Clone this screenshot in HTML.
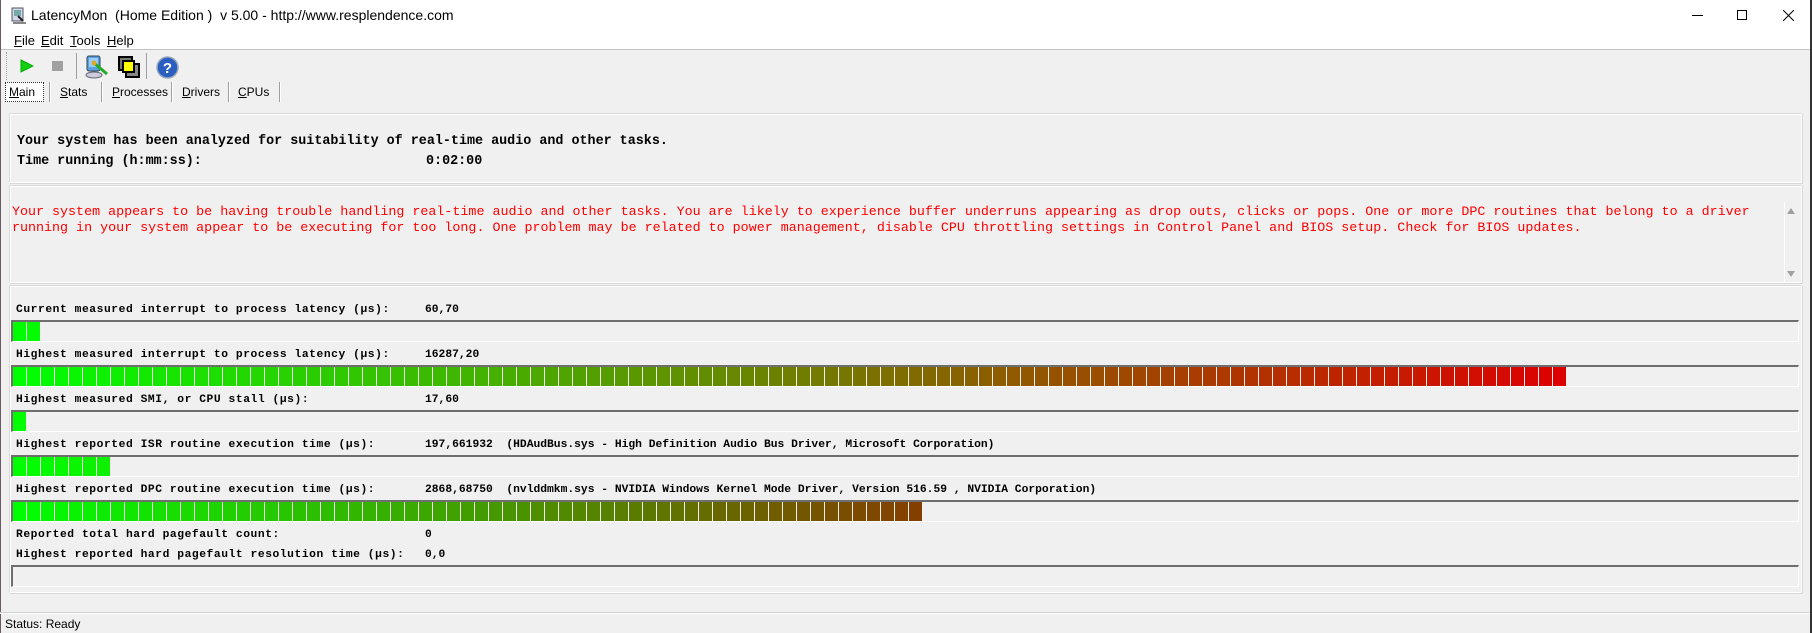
<!DOCTYPE html>
<html><head><meta charset="utf-8"><style>
*{margin:0;padding:0;box-sizing:border-box}
body{width:1812px;height:633px;background:#f0f0f0;position:relative;overflow:hidden;font-family:"Liberation Sans",sans-serif;font-size:13px;color:#000}
.a{position:absolute;white-space:nowrap}
.mono{font-family:"Liberation Mono",monospace}
.panel{position:absolute;left:9px;right:10px;border:1px solid #dadada;border-right-color:#fff;border-bottom-color:#fff;box-shadow:inset 1px 1px 0 #fff, 1px 1px 0 #d8d8d8}
.lbl{font-family:"Liberation Mono",monospace;font-size:11.3px;letter-spacing:0.55px;font-weight:bold;position:absolute;left:16px;white-space:nowrap;line-height:13px}
.val{left:425px;letter-spacing:0}
.bar{position:absolute;left:11px;width:1788px;height:22px;border-top:2px solid #6e6e6e;border-left:2px solid #6e6e6e;border-right:1px solid #fff;border-bottom:1px solid #fff;overflow:hidden}
.seg{position:absolute;top:0;height:19px;width:13px}
.tab{position:absolute;top:85px;font-size:12px}
.sep{position:absolute;top:82px;width:1px;height:20px;background:#a0a0a0;box-shadow:1px 0 0 #fff}
u{text-decoration:underline}
</style></head><body>
<div class="a" style="left:0;top:0;width:1812px;height:50px;background:#fff;border-bottom:1px solid #c4c4c4"></div>
<div class="a" style="right:0;top:0;width:2px;height:633px;background:#333"></div>
<div class="a" style="left:0;top:0;width:1px;height:633px;background:#6a5a66"></div>
<svg class="a" style="left:10px;top:7px" width="18" height="18" viewBox="0 0 18 18"><rect x="2" y="1" width="11" height="13" fill="#cfd8e6" stroke="#556" /><rect x="4" y="3" width="7" height="6" fill="#7aa"/><path d="M3 15h13v2H3z" fill="#888"/><path d="M8 9l5 5" stroke="#222" stroke-width="2"/></svg>
<div class="a" style="left:31px;top:7px;font-size:14px">LatencyMon&nbsp; (Home Edition )&nbsp; v 5.00 - http://www.resplendence.com</div>
<div class="a" style="left:1692px;top:15px;width:11px;height:1px;background:#000"></div>
<div class="a" style="left:1737px;top:10px;width:10px;height:10px;border:1px solid #000"></div>
<svg class="a" style="left:1783px;top:10px" width="11" height="11"><path d="M0 0L11 11M11 0L0 11" stroke="#000" stroke-width="1"/></svg>
<div class="a" style="left:14px;top:33px"><u>F</u>ile</div>
<div class="a" style="left:41px;top:33px"><u>E</u>dit</div>
<div class="a" style="left:70px;top:33px"><u>T</u>ools</div>
<div class="a" style="left:107px;top:33px"><u>H</u>elp</div>
<div class="a" style="left:6px;top:52px;width:1px;height:28px;border-left:1px dotted #999"></div>
<svg class="a" style="left:20px;top:59px" width="14" height="14"><path d="M1 1L13 7L1 13Z" fill="#10d010" stroke="#0a0" stroke-width="1"/></svg>
<div class="a" style="left:52px;top:61px;width:11px;height:10px;background:#a0a0a0"></div>
<div class="a" style="left:76px;top:53px;width:1px;height:26px;background:#a0a0a0"></div>
<svg class="a" style="left:84px;top:54px" width="26" height="26" viewBox="0 0 26 26"><rect x="3" y="2" width="13" height="15" rx="2" fill="#5aa0e0" stroke="#345"/><rect x="5" y="4" width="9" height="9" fill="#9cf"/><ellipse cx="10" cy="21" rx="8" ry="3" fill="#ccd" stroke="#667"/><path d="M10 9l13 11" stroke="#2a2" stroke-width="3"/><circle cx="10" cy="9" r="2.5" fill="#da2"/></svg>
<svg class="a" style="left:117px;top:55px" width="24" height="24" viewBox="0 0 24 24"><rect x="9" y="9" width="13" height="13" fill="#888" stroke="#000" stroke-width="2"/><rect x="2" y="2" width="13" height="13" fill="#777" stroke="#000" stroke-width="2"/><rect x="6" y="6" width="11" height="11" fill="#ff0" stroke="#000" stroke-width="2"/></svg>
<div class="a" style="left:146px;top:53px;width:1px;height:26px;background:#a0a0a0"></div>
<svg class="a" style="left:156px;top:56px" width="23" height="23" viewBox="0 0 23 23"><circle cx="11.5" cy="11.5" r="10.5" fill="#2a5fc0" stroke="#9ab" stroke-width="1.5"/><text x="11.5" y="17" font-family="Liberation Sans" font-weight="bold" font-size="15" fill="#fff" text-anchor="middle">?</text></svg>
<div class="a" style="left:5px;top:82px;width:39px;height:20px;border:1px dotted #333;background:#fff"></div>
<div class="tab" style="left:9px"><u>M</u>ain</div>
<div class="sep" style="left:49px"></div>
<div class="tab" style="left:60px"><u>S</u>tats</div>
<div class="sep" style="left:101px"></div>
<div class="tab" style="left:112px"><u>P</u>rocesses</div>
<div class="sep" style="left:171px"></div>
<div class="tab" style="left:182px"><u>D</u>rivers</div>
<div class="sep" style="left:228px"></div>
<div class="tab" style="left:238px"><u>C</u>PUs</div>
<div class="sep" style="left:279px"></div>
<div class="panel" style="top:113px;height:70px"></div>
<div class="a mono" style="left:17px;top:134px;font-size:13.4px;font-weight:bold;line-height:16px">Your system has been analyzed for suitability of real-time audio and other tasks.</div>
<div class="a mono" style="left:17px;top:154px;font-size:13.4px;font-weight:bold;line-height:16px">Time running (h:mm:ss):</div>
<div class="a mono" style="left:426px;top:154px;font-size:13.4px;font-weight:bold;line-height:16px">0:02:00</div>
<div class="panel" style="top:185px;height:98px"></div>
<div class="a mono" style="left:12px;top:205px;font-size:13.35px;line-height:16px;color:#ff0000">Your system appears to be having trouble handling real-time audio and other tasks. You are likely to experience buffer underruns appearing as drop outs, clicks or pops. One or more DPC routines that belong to a driver<br>running in your system appear to be executing for too long. One problem may be related to power management, disable CPU throttling settings in Control Panel and BIOS setup. Check for BIOS updates.</div>
<div class="a" style="left:1784px;top:202px;width:1px;height:80px;background:#fff"></div>
<svg class="a" style="left:1786px;top:207px" width="10" height="8"><path d="M1 7L5 1L9 7Z" fill="#a0a0a0"/></svg>
<svg class="a" style="left:1786px;top:270px" width="10" height="8"><path d="M1 1L5 7L9 1Z" fill="#a0a0a0"/></svg>
<div class="panel" style="top:285px;height:308px"></div>
<div class="lbl" style="top:304px">Current measured interrupt to process latency (µs):</div><div class="lbl val" style="top:304px">60,70</div>
<div class="bar" id="b1" style="top:320px"></div>
<div class="lbl" style="top:349px">Highest measured interrupt to process latency (µs):</div><div class="lbl val" style="top:349px">16287,20</div>
<div class="bar" id="b2" style="top:365px"></div>
<div class="lbl" style="top:394px">Highest measured SMI, or CPU stall (µs):</div><div class="lbl val" style="top:394px">17,60</div>
<div class="bar" id="b3" style="top:410px"></div>
<div class="lbl" style="top:439px">Highest reported ISR routine execution time (µs):</div><div class="lbl val" style="top:439px">197,661932&nbsp; (HDAudBus.sys - High Definition Audio Bus Driver, Microsoft Corporation)</div>
<div class="bar" id="b4" style="top:455px"></div>
<div class="lbl" style="top:484px">Highest reported DPC routine execution time (µs):</div><div class="lbl val" style="top:484px">2868,68750&nbsp; (nvlddmkm.sys - NVIDIA Windows Kernel Mode Driver, Version 516.59 , NVIDIA Corporation)</div>
<div class="bar" id="b5" style="top:500px"></div>
<div class="lbl" style="top:529px">Reported total hard pagefault count:</div><div class="lbl val" style="top:529px">0</div>
<div class="lbl" style="top:549px">Highest reported hard pagefault resolution time (µs):</div><div class="lbl val" style="top:549px">0,0</div>
<div class="bar" style="top:565px"></div>
<div class="a" style="left:0;top:612px;width:1810px;height:1px;background:#d0d0d0;box-shadow:0 1px 0 #fff"></div>
<div class="a" style="left:5px;top:617px;font-size:12px">Status: Ready</div>
<script>
function fill(id,n,scale,rmax,w){
  var b=document.getElementById(id),h='';
  for(var i=0;i<n;i++){
    var x=i*14+7,t=Math.min(1,x/scale);
    var r=Math.round(t*rmax),g=Math.round(255*(1-t));
    h+='<div class="seg" style="left:'+(i*14)+'px;width:'+(w||13)+'px;background:rgb('+r+','+g+',0)"></div>';
  }
  b.innerHTML=h;
}
fill('b1',2,1550,221);
fill('b2',111,1550,221);
fill('b3',1,1550,221);
fill('b4',7,1550,221);
fill('b5',65,1200,175);
</script>
</body></html>
